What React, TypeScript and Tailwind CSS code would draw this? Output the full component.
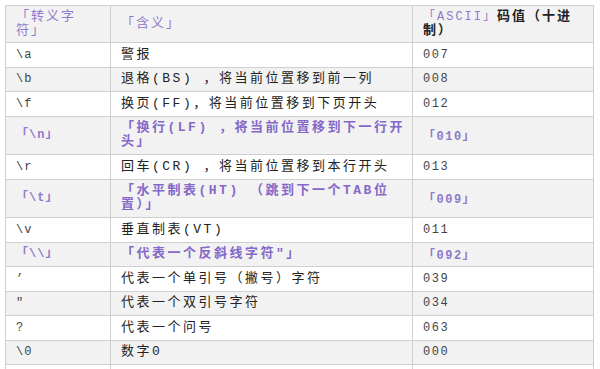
import React from "react";

const FONT = {
  fontFamily: '"Liberation Mono", "Noto Sans CJK SC", monospace',
};

type Row = {
  code: React.ReactNode;
  desc: React.ReactNode;
  value: React.ReactNode;
  tall?: boolean;
  link?: boolean;
};

const rows: Row[] = [
  { code: "\\a", desc: "警报", value: "007" },
  { code: "\\b", desc: "退格(BS) ，将当前位置移到前一列", value: "008" },
  { code: "\\f", desc: "换页(FF)，将当前位置移到下页开头", value: "012" },
  {
    code: "「\\n」",
    desc: (
      <>
        「换行(LF) ，将当前位置移到下一行开
        <br />
        头」
      </>
    ),
    value: "「010」",
    tall: true,
    link: true,
  },
  { code: "\\r", desc: "回车(CR) ，将当前位置移到本行开头", value: "013" },
  {
    code: "「\\t」",
    desc: (
      <>
        「水平制表(HT) （跳到下一个TAB位
        <br />
        置）」
      </>
    ),
    value: "「009」",
    tall: true,
    link: true,
  },
  { code: "\\v", desc: "垂直制表(VT)", value: "011" },
  {
    code: "「\\\\」",
    desc: "「代表一个反斜线字符″」",
    value: "「092」",
    link: true,
  },
  { code: "’", desc: "代表一个单引号（撇号）字符", value: "039" },
  { code: "″", desc: "代表一个双引号字符", value: "034" },
  { code: "?", desc: "代表一个问号", value: "063" },
  { code: "\\0", desc: "数字0", value: "000" },
  { code: "", desc: "", value: "" },
];

export default function App() {
  return (
    <div className="h-[369px] w-[600px] overflow-hidden bg-white pl-[5px] pt-[5px]" style={FONT}>
      <table className="w-[589px] table-fixed border-collapse border border-[#cfcfcf] text-[13px] leading-[14px]">
        <colgroup>
          <col className="w-[105px]" />
          <col className="w-[302px]" />
          <col />
        </colgroup>
        <thead>
          <tr className="h-[37px] bg-[#f2f2f2]">
            <th className="whitespace-nowrap border border-[#cfcfcf] px-[10px] text-left align-middle font-normal tracking-[2px] text-[#8f7acb]">
              「转义字
              <br />
              符」
            </th>
            <th className="whitespace-nowrap border border-[#cfcfcf] px-[10px] text-left align-middle font-normal tracking-[2px] text-[#8f7acb]">
              「含义」
            </th>
            <th className="whitespace-nowrap border border-[#cfcfcf] px-[10px] text-left align-middle tracking-[2px]">
              <span className="text-[12px] font-normal text-[#8f7acb]">「ASCII」</span>
              <span className="font-bold text-[#222]">码值（十进</span>
              <br />
              <span className="font-bold text-[#222]">制）</span>
            </th>
          </tr>
        </thead>
        <tbody>
          {rows.map((r, i) => (
            <tr
              key={i}
              className={`${r.tall ? "h-[38.5px]" : "h-[24.5px]"} ${
                i % 2 === 1 ? "bg-[#f2f2f2]" : "bg-white"
              }`}
            >
              <td
                className={`whitespace-nowrap border border-[#cfcfcf] px-[10px] align-middle text-[12px] tracking-[1px] ${
                  r.link ? "font-semibold text-[#8f7acb]" : "text-[#444]"
                }`}
              >
                {r.code}
              </td>
              <td
                className={`whitespace-nowrap border border-[#cfcfcf] px-[10px] align-middle tracking-[2.5px] ${
                  r.link ? "font-semibold text-[#8568c8]" : "text-[#222]"
                }`}
              >
                {r.desc}
              </td>
              <td
                className={`whitespace-nowrap border border-[#cfcfcf] px-[10px] align-middle text-[12px] tracking-[1.5px] ${
                  r.link ? "pt-[4px] font-semibold text-[#8f7acb]" : "text-[#444]"
                }`}
              >
                {r.value}
              </td>
            </tr>
          ))}
        </tbody>
      </table>
    </div>
  );
}
